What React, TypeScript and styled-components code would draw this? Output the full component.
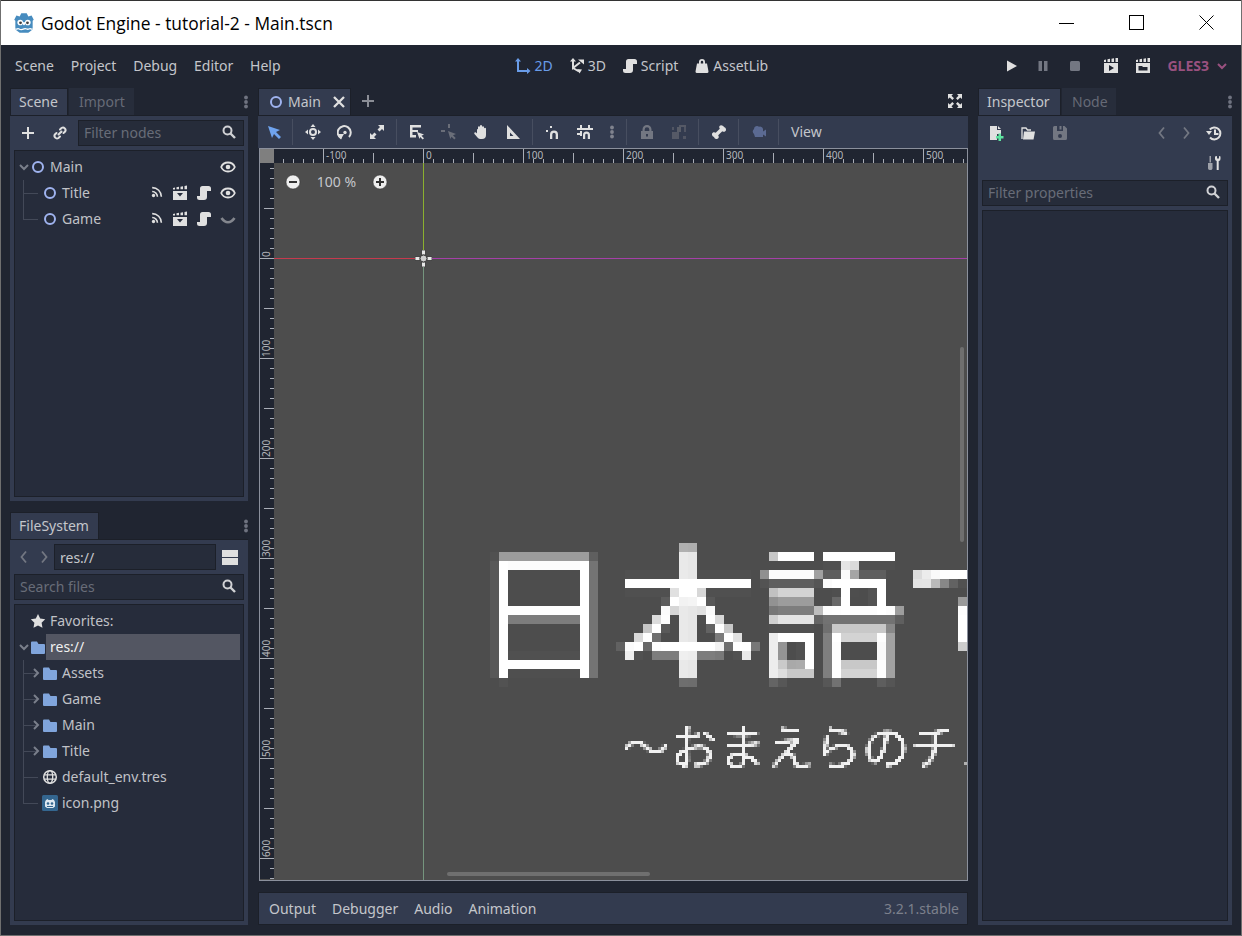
import React from 'react';
import styled, { createGlobalStyle } from 'styled-components';

const GlobalStyle = createGlobalStyle`
  html, body {
    margin: 0;
    padding: 0;
    background: #202531;
    font-family: "Noto Sans", "Open Sans", sans-serif;
  }
`;

// ---- icons, all drawn on the 16x16 grid godot uses ----

const Svg = styled.svg<{ $s?: number }>`
  display: block;
  flex: none;
  width: ${p => p.$s || 16}px;
  height: ${p => p.$s || 16}px;
`;

type IconProps = { c?: string; s?: number };
const WHITE = '#e0e0e0';
const DIM = '#737782';

const mk = (body: (c: string) => React.ReactNode, fallback = WHITE) =>
  ({ c = fallback, s }: IconProps) => (
    <Svg $s={s} viewBox="0 0 16 16">
      {body(c)}
    </Svg>
  );

const NodeIcon = mk(c => <circle cx="8" cy="8" r="5" fill="none" stroke={c} strokeWidth="2" />, '#9fb3ef');
const PlusIcon = mk(c => <path d="M7 2h2v5h5v2H9v5H7V9H2V7h5z" fill={c} />);
const LinkIcon = mk(c => (
  <g fill="none" stroke={c} strokeWidth="2" strokeLinecap="round">
    <path d="M6.5 9.5l3-3" />
    <path d="M8 4.5l1.5-1.5a2.6 2.6 0 0 1 3.6 3.6L11.5 8" />
    <path d="M8 11.5L6.5 13a2.6 2.6 0 0 1-3.6-3.6L4.500 8" />
  </g>
));
const SearchIcon = mk(c => (
  <g fill="none" stroke={c}>
    <circle cx="6.500" cy="6.500" r="4" strokeWidth="2" />
    <path d="M9.500 9.500l4.500 4.500" strokeWidth="2.400" />
  </g>
), '#d0d1d4');
const KebabIcon = mk(c => (
  <g fill={c}>
    <circle cx="8" cy="3.500" r="1.900" />
    <circle cx="8" cy="8" r="1.900" />
    <circle cx="8" cy="12.500" r="1.900" />
  </g>
), '#6f7380');
const EyeIcon = mk(c => (
  <g>
    <path d="M8 3.500C4.500 3.500 2 6 1.200 8c.8 2 3.300 4.500 6.800 4.500s6-2.500 6.800-4.500C14 6 11.500 3.500 8 3.500z" fill="none" stroke={c} strokeWidth="1.800" />
    <circle cx="8" cy="8" r="2.300" fill={c} />
  </g>
));
const EyeClosedIcon = mk(c => <path d="M1.500 7c2 3 4.200 4.200 6.500 4.200S12.500 10 14.500 7" fill="none" stroke={c} strokeWidth="2.600" opacity="0.5" />);
const SignalIcon = mk(c => (
  <g fill="none" stroke={c} strokeWidth="1.800">
    <circle cx="4" cy="12" r="1.900" fill={c} stroke="none" />
    <path d="M2.500 7.500a6 6 0 0 1 6 6" />
    <path d="M2.500 3a10.500 10.500 0 0 1 10.500 10.500" />
  </g>
));
const ClapperIcon = mk(c => (
  <g fill={c}>
    <path d="M1 3l2-.5v2H1zM4.500 2.300l2.500-.5v2.500H4.500zM8.500 1.700l2.500-.5v3H8.500zM12.500 1l2.500-.5v3.800h-2.500z" />
    <path fillRule="evenodd" d="M1 6h14v9H1zM5 8l3 3.500L11 8z" />
  </g>
));
const ScriptIcon = mk(c => <path d="M6.500 1A2.500 2.500 0 0 0 4 3.500V11H1v1.500A2.500 2.500 0 0 0 3.500 15H8a3 3 0 0 0 3-3V6h4V3.500A2.500 2.500 0 0 0 12.500 1z" fill={c} />);
const FolderIcon = mk(c => <path d="M2 2.500a1 1 0 0 0-1 1V14a1 1 0 0 0 1 1h12a1 1 0 0 0 1-1V6a1 1 0 0 0-1-1H8.500L7 2.500z" fill={c} />, '#80a5dc');
const ChevronDown = mk(c => <path d="M4 6l4 4 4-4" fill="none" stroke={c} strokeWidth="2" />, '#7a7f8b');
const ChevronRight = mk(c => <path d="M6 4l4 4-4 4" fill="none" stroke={c} strokeWidth="2" />, '#7a7f8b');
const BackIcon = mk(c => <path d="M10 2.500L5.500 8l4.500 5.500" fill="none" stroke={c} strokeWidth="1.800" />, DIM);
const ForwardIcon = mk(c => <path d="M6 2.500L10.500 8 6 13.500" fill="none" stroke={c} strokeWidth="1.800" />, DIM);
const StarIcon = mk(c => <path d="M8 1l2.200 4.600 5 .7-3.600 3.500.9 5L8 12.400l-4.500 2.400.9-5L.8 6.300l5-.7z" fill={c} />);
const SplitIcon = mk(c => <path d="M0 1h16v7H0zM0 9h16v7H0z" fill={c} />);
const GlobeIcon = mk(c => (
  <g fill="none" stroke={c} strokeWidth="1.300">
    <circle cx="8" cy="8" r="6.300" strokeWidth="1.500" />
    <ellipse cx="8" cy="8" rx="2.700" ry="6.300" />
    <path d="M2 5.800h12M2 10.200h12" />
  </g>
));
const IconPng = () => (
  <Svg viewBox="0 0 16 16">
    <rect width="16" height="16" rx="1.500" fill="#34668f" />
    <path d="M4 5l1.500-1 1 1h3l1-1L12 5l1 2v4.500l-2 1.500H5l-2-1.500V7z" fill="#dfe9f1" />
    <circle cx="6" cy="8.500" r="1.300" fill="#34668f" />
    <circle cx="10" cy="8.500" r="1.300" fill="#34668f" />
    <path d="M5 11.500h6" stroke="#34668f" />
  </Svg>
);
const CloseIcon = mk(c => <path d="M3 3l10 10M13 3L3 13" stroke={c} strokeWidth="2.300" fill="none" />);
const FullIcon = mk(c => (
  <path d="M1 1h5L4.500 2.800 7 5.300 5.300 7 2.800 4.500 1 6zM15 1v5l-1.800-1.500L10.700 7 9 5.300l2.500-2.500L10 1zM1 15v-5l1.800 1.500L5.300 9 7 10.700l-2.500 2.500L6 15zM15 15h-5l1.500-1.800L9 10.700 10.700 9l2.500 2.500L15 10z" fill={c} />
));

const SelectIcon = mk(c => <path d="M2 2l12 4-4 2 5 5-2 2-5-5-2 4z" fill={c} />, '#6fa3ee');
const MoveIcon = mk(c => (
  <g fill={c}>
    <path d="M8 0l2.500 3h-5zM8 16l-2.500-3h5zM0 8l3-2.500v5zM16 8l-3 2.500v-5z" />
    <circle cx="8" cy="8" r="3" fill="none" stroke={c} strokeWidth="2" />
  </g>
));
const RotateIcon = mk(c => (
  <g>
    <path d="M4.500 14.500A6.500 6.500 0 1 1 12 13" fill="none" stroke={c} strokeWidth="2" />
    <path d="M1 10h6l-3 5z" fill={c} />
    <circle cx="8" cy="8.500" r="1.700" fill={c} />
  </g>
));
const ScaleIcon = mk(c => (
  <path d="M9 1h6v6l-2-2-2.500 2.500L8.500 5.500 11 3zM7 15H1V9l2 2 2.500-2.500 2 2L5 13z" fill={c} />
));
const ListSelectIcon = mk(c => (
  <g fill={c}>
    <path d="M1 1h11v2.500H3.500V6H9v2H3.500v3H7v2.500H1z" />
    <path d="M8 8l7 2.500-2.500 1.200 2.500 2.500-1.300 1.300-2.500-2.500L10.500 15z" />
  </g>
));
const PointerDimIcon = mk(c => (
  <g fill={c}>
    <path d="M7 0h2v4H7zM0 6h4v2H0z" />
    <path d="M7 7l8 3-3 1.300 2.700 2.700-1.400 1.400-2.700-2.700L9.300 15z" />
  </g>
), '#6a6e79');
const HandIcon = mk(c => (
  <path d="M5 5.500V3.200a1 1 0 0 1 2 0V2a1 1 0 0 1 2 0v1.200a1 1 0 0 1 2 0v1.500a1 1 0 0 1 2 0V11a4 4 0 0 1-4 4H7a3 3 0 0 1-2.500-1.400L1.500 10a1 1 0 0 1 1.500-1.400l1 1V5.500a.5.500 0 0 1 1 0z" fill={c} />
));
const RulerIcon = mk(c => <path fillRule="evenodd" d="M2 1l13 14H2zM5 8.500V12h3.500z" fill={c} />);
const SnapIcon = mk(c => (
  <g fill={c}>
    <path fillRule="evenodd" d="M5 15V10.500a4 4 0 0 1 8 0V15h-2.300v-4.500a1.700 1.700 0 0 0-3.400 0V15z" />
    <rect x="1" y="6" width="2" height="2" />
    <rect x="5" y="2" width="2" height="2" />
  </g>
));
const GridSnapIcon = mk(c => (
  <g fill={c}>
    <path fillRule="evenodd" d="M6 15V11a3.500 3.500 0 0 1 7 0v4h-2.200v-4a1.300 1.300 0 0 0-2.600 0v4z" />
    <path d="M3 1h2v3h6V1h2v3h3v2H0V4h3zM3 7h2v5H3zM0 9h4v2H0z" />
  </g>
));
const LockIcon = mk(c => (
  <path fillRule="evenodd" d="M8 1a4.500 4.500 0 0 0-4.500 4.500V7H2v8h12V7h-1.500V5.500A4.500 4.500 0 0 0 8 1zm0 2.200a2.300 2.300 0 0 1 2.300 2.300V7H5.700V5.500A2.300 2.300 0 0 1 8 3.200zM7 10h2v2.500H7z" fill={c} />
), DIM);
const GroupIcon = mk(c => (
  <g fill={c}>
    <path d="M8 1h7v2H8zM1 8h7v7H1z" opacity="0.9" />
    <path d="M6 3h4v5H6z" />
    <path d="M13 3h2v5h-2zM1 3h2v3H1zM12 12h3v3h-3z" opacity="0.8" />
  </g>
), '#595d68');
const BoneIcon = mk(c => (
  <path d="M11 1.500a2.500 2.500 0 0 1 2 1.500 2.500 2.500 0 0 1 1 4.500c-1 .5-2 .2-2.700-.3L7.200 11.300c.5.800.8 1.800.3 2.700a2.500 2.500 0 0 1-4.500-1 2.500 2.500 0 0 1-1-4.500c1-.5 2-.2 2.700.3l4.100-4.100C8.300 3.900 8 3 8.500 2A2.500 2.500 0 0 1 11 1.500z" fill={c} />
));
const CameraIcon = mk(c => <path d="M3 5a3 3 0 0 1 5-2.200A3 3 0 0 1 12 5v2.500L15 5.500v7l-3-2V13H4l-1-3a3.500 3.500 0 0 1 0-5z" fill={c} />, '#5b6a92');
const TwoDIcon = mk(c => (
  <path d="M3 0l3 3.500H4V12h8v-2l3.500 3-3.500 3v-2H2V3.500H0z" fill={c} />
), '#699ce8');
const ThreeDIcon = mk(c => (
  <g>
    <path d="M4 2v8l7-5.500M4 10l6 3.500" fill="none" stroke={c} strokeWidth="2" />
    <path d="M1 3.500L4 0l3 3.500zM9 1.500h6v5zM8 11l5 .5-2.500 4z" fill={c} />
  </g>
));
const BagIcon = mk(c => (
  <path fillRule="evenodd" d="M8 1a3 3 0 0 0-3 3v1.500H3l-1.500 8A1.500 1.500 0 0 0 3 15h10a1.500 1.500 0 0 0 1.500-1.500L13 5.500h-2V4a3 3 0 0 0-3-3zm0 1.800A1.200 1.200 0 0 1 9.200 4v1.500H6.800V4A1.200 1.200 0 0 1 8 2.800z" fill={c} />
));
const PlayIcon = mk(c => <path d="M4 2.500L14 8 4 13.500z" fill={c} />);
const PauseIcon = mk(c => <path d="M3.500 3h3.500v10H3.500zM9 3h3.500v10H9z" fill={c} />, DIM);
const StopIcon = mk(c => <rect x="3" y="3" width="10" height="10" rx="1.500" fill={c} />, DIM);
const MoviePlayIcon = mk(c => (
  <g fill={c}>
    <path d="M1 2l2-.5v2.500H1zM4.500 1.300L7 .8V4H4.500zM8.500.7L11 .3V4H8.500zM12.500 0L15 0v4h-2.500z" />
    <path fillRule="evenodd" d="M1 5h14v10H1zM6 7v6l5-3z" />
  </g>
));
const MovieFolderIcon = mk(c => (
  <g fill={c}>
    <path d="M1 2l2-.5v2.500H1zM4.500 1.300L7 .8V4H4.500zM8.500.7L11 .3V4H8.500zM12.500 0L15 0v4h-2.500z" />
    <path fillRule="evenodd" d="M1 5h14v10H1zM3.500 8v4.500h9V9H8L7 8z" />
  </g>
));
const NewDocIcon = () => (
  <Svg viewBox="0 0 16 16">
    <path d="M2 1h7v4h4v4H9v6H2z" fill={WHITE} />
    <path d="M10 1l3 3h-3z" fill={WHITE} />
    <path d="M10.500 8.500h2.500v2.500h2.500v2.500H13V16h-2.500v-2.500H8V11h2.500z" fill="#5fe3a0" />
  </Svg>
);
const OpenIcon = mk(c => (
  <g>
    <path d="M2 14V3h4l1.500 2H11" fill="none" stroke={c} strokeWidth="1.300" />
    <path d="M4 6.500h11l-1.500 8H3z" fill={c} />
  </g>
));
const SaveIcon = mk(c => (
  <path fillRule="evenodd" d="M2.500 1A1.500 1.500 0 0 0 1 2.500v11A1.500 1.500 0 0 0 2.500 15h11a1.500 1.500 0 0 0 1.500-1.500v-10L12.500 1H11v5H5V1zM7.500 1v3.500H9.500V1zM8 9a2 2 0 1 1 0 4 2 2 0 0 1 0-4z" fill={c} />
), DIM);
const HistoryIcon = mk(c => (
  <g>
    <path d="M3.800 4.500A6 6 0 1 1 4 12.500" fill="none" stroke={c} strokeWidth="2" />
    <path d="M0 6h6L3 10z" fill={c} />
    <path d="M8 4.500h2V8h2.500v2H8z" fill={c} />
  </g>
));
const ToolsIcon = mk(c => (
  <g fill={c}>
    <path d="M3.500 1h1.500v6.500H3.500zM2 8h4.500v5.500A2 2 0 0 1 4.500 15h-.5A2 2 0 0 1 2 13.500z" opacity="0.62" />
    <path d="M9 1.500V4a2 2 0 0 0 1.700 2v9h2V6a2 2 0 0 0 1.800-2V1.500L13 1v2.500h-2V1z" />
  </g>
));

const LogoSvg = styled.svg`
  width: 26px;
  height: 26px;
  flex: none;
`;

const GodotLogo = () => (
  <LogoSvg viewBox="0 0 24 24">
    <path d="M3 9l2-4 3 1 1.500-3h5L16 6l3-1 2 4-1 1v8l-4 3H8l-4-3v-8z" fill="#478cbf" />
    <circle cx="8.500" cy="11.500" r="2.600" fill="#fff" />
    <circle cx="15.500" cy="11.500" r="2.600" fill="#fff" />
    <circle cx="8.800" cy="11.800" r="1.300" fill="#414042" />
    <circle cx="15.200" cy="11.800" r="1.300" fill="#414042" />
    <rect x="11" y="11" width="2" height="3" rx="1" fill="#fff" />
    <path d="M4 17.500c2 .5 2-1 3.500 0s2 1 4.500 0 2.500 1 4.500 0 1.500.5 3.500 0" fill="none" stroke="#fff" strokeWidth="1.200" />
  </LogoSvg>
);

// ---- window frame ----

const Page = styled.div`
  width: 1242px;
  height: 936px;
  box-sizing: border-box;
  display: flex;
  flex-direction: column;
  overflow: hidden;
  background: #202531;
  border-left: 1px solid #6f6f6f;
  border-right: 1px solid #6f6f6f;
  border-bottom: 1px solid #6f6f6f;
`;

const TitleBar = styled.div`
  height: 45px;
  flex: none;
  box-sizing: border-box;
  display: flex;
  align-items: center;
  padding: 0 0 0 10px;
  background: #fff;
  border-top: 1px solid #333;
`;

const TitleText = styled.div`
  margin-left: 4px;
  font-family: "Open Sans", "Noto Sans", sans-serif;
  font-size: 17.4px;
  color: #000;
  white-space: nowrap;
`;

const WinButtons = styled.div`
  margin-left: auto;
  display: flex;
  align-items: center;
  margin-right: 26px;
  gap: 54px;
`;

const WinSvg = styled.svg`
  width: 16px;
  height: 16px;
  display: block;
`;

const MenuBar = styled.div`
  height: 43px;
  flex: none;
  box-sizing: border-box;
  display: flex;
  align-items: center;
  padding: 0 0 2px 14px;
  color: #c4c6cb;
  font-size: 14px;
`;

const MenuItem = styled.span`
  margin-right: 16.8px;
`;

const MainTabs = styled.div`
  display: flex;
  align-items: center;
  gap: 16px;
  margin-left: 218px;
`;

const MainTab = styled.div<{ $active?: boolean }>`
  display: flex;
  align-items: center;
  gap: 3px;
  color: ${p => (p.$active ? '#699ce8' : '#c4c6cb')};
`;

const RunGroup = styled.div`
  margin-left: auto;
  display: flex;
  align-items: center;
  margin-right: 11px;
`;

const RunButton = styled.div<{ $w: number }>`
  width: ${p => p.$w}px;
  display: flex;
  justify-content: center;
`;

const Driver = styled.div`
  display: flex;
  align-items: center;
  gap: 5px;
  margin-left: 12px;
  color: #99517f;
  font-weight: 700;
  font-size: 14px;
`;

const Workspace = styled.div`
  flex: 1;
  min-height: 0;
  display: flex;
  gap: 10px;
  padding: 0 9px 10px 9px;
`;

const Column = styled.div<{ $w: number; $gap?: number }>`
  width: ${p => p.$w}px;
  flex: none;
  display: flex;
  flex-direction: column;
  gap: ${p => p.$gap || 0}px;
`;

const Dock = styled.div<{ $h?: number }>`
  display: flex;
  flex-direction: column;
  ${p => (p.$h ? `height: ${p.$h}px; flex: none;` : 'flex: 1; min-height: 0;')}
`;

const TabRow = styled.div`
  height: 28px;
  flex: none;
  display: flex;
  align-items: stretch;
  margin-bottom: -1px;
`;

const Tab = styled.div<{ $active?: boolean; $w: number }>`
  width: ${p => p.$w}px;
  box-sizing: border-box;
  display: flex;
  align-items: center;
  padding: 0 0 2px ${p => (p.$active ? 8 : 10)}px;
  font-size: 14px;
  margin-right: 1px;
  background: ${p => (p.$active ? '#333b4f' : '#272d3b')};
  color: ${p => (p.$active ? '#c4c6cb' : '#666a76')};
  ${p => p.$active && 'border-top: 1px solid #1c2029; border-left: 1px solid #1c2029; border-right: 1px solid #1c2029;'}
`;

const DockMenu = styled.div`
  margin-left: auto;
  margin-right: -6px;
  align-self: center;
  padding-bottom: 1px;
`;

const Panel = styled.div`
  flex: 1;
  min-height: 0;
  box-sizing: border-box;
  display: flex;
  flex-direction: column;
  padding: 4px;
  gap: 4px;
  background: #333b4f;
  border-top: 1px solid #1c2029;
`;

const Bar = styled.div`
  height: 26px;
  flex: none;
  display: flex;
  align-items: center;
`;

const BarIcon = styled.div<{ $w: number }>`
  width: ${p => p.$w}px;
  flex: none;
  display: flex;
  justify-content: center;
`;

const Input = styled.div<{ $bright?: boolean }>`
  flex: 1;
  height: 100%;
  box-sizing: border-box;
  display: flex;
  align-items: center;
  justify-content: space-between;
  padding: 0 6px ${p => (p.$bright ? 0 : 2)}px 5px;
  background: #262c3a;
  border: 1px solid #1c2029;
  font-size: 14px;
  color: ${p => (p.$bright ? '#c4c6cb' : '#686c78')};
`;

const Tree = styled.div`
  flex: 1;
  min-height: 0;
  box-sizing: border-box;
  padding-top: 3px;
  background: #262c3b;
  border: 1px solid #1c2029;
`;

const RowGroup = styled.div``;

const Row = styled.div<{ $depth?: number; $guide?: boolean }>`
  position: relative;
  height: 26px;
  display: flex;
  align-items: center;
  padding-left: ${p => 1 + 12 * (p.$depth || 0)}px;
  font-size: 14px;
  color: #c0c2c7;
  ${p =>
    p.$guide &&
    `&::before {
      content: '';
      position: absolute;
      left: 8px;
      top: -13px;
      width: 14px;
      height: 26px;
      border-left: 1px solid #434958;
      border-bottom: 1px solid #434958;
    }
    &:first-child::before {
      top: 0;
      height: 13px;
    }`}
`;

const Fold = styled.div`
  position: relative;
  width: 16px;
  flex: none;
`;

const IconSlot = styled.div`
  position: relative;
  width: 14px;
  flex: none;
  margin-left: -1px;
  display: flex;
  justify-content: center;
`;

const Label = styled.div<{ $selected?: boolean }>`
  margin-left: 5px;
  height: 26px;
  line-height: 26px;
  ${p =>
    p.$selected
      ? 'flex: 1; margin-left: 1px; margin-right: 3px; padding-left: 4px; background: #535662; color: #f0f0f0;'
      : ''}
`;

const RowIcons = styled.div`
  margin-left: auto;
  display: flex;
  gap: 8px;
  padding-right: 7px;
`;

// ---- center column ----

const EditorTabs = styled.div`
  height: 28px;
  flex: none;
  display: flex;
  align-items: stretch;
  margin-bottom: -1px;
`;

const SceneTab = styled.div`
  width: 93px;
  box-sizing: border-box;
  display: flex;
  align-items: center;
  padding: 0 0 2px 9px;
  gap: 4px;
  font-size: 14px;
  color: #c4c6cb;
  background: #333b4f;
  border: 1px solid #1c2029;
  border-bottom: none;
`;

const TabClose = styled.div`
  margin-left: auto;
  margin-right: 3px;
`;

const AddTab = styled.div`
  margin-left: 9px;
  align-self: center;
  padding-bottom: 2px;
`;

const FullBtn = styled.div`
  margin-left: auto;
  margin-right: 5px;
  align-self: center;
  padding-bottom: 2px;
`;

const Toolbar = styled.div`
  height: 33px;
  flex: none;
  box-sizing: border-box;
  display: flex;
  align-items: center;
  padding-bottom: 1px;
  background: #333b4f;
  border-top: 1px solid #1c2029;
`;

const ToolButton = styled.div<{ $w?: number }>`
  width: ${p => p.$w || 32}px;
  flex: none;
  display: flex;
  justify-content: center;
`;

const ToolSep = styled.div`
  width: 1px;
  height: 26px;
  flex: none;
  margin: 0 4px 0 3px;
  background: #474e60;
`;

const ToolText = styled.div`
  margin-left: 8px;
  font-size: 14px;
  color: #c4c6cb;
`;

const Viewport = styled.div`
  flex: 1;
  min-height: 0;
  margin: 0 0 0 1px;
  width: 709px;
  box-sizing: border-box;
  display: flex;
  flex-direction: column;
  border: 1px solid #8b909c;
  background: #4d4d4d;
`;

const RulerTop = styled.div`
  height: 14px;
  flex: none;
  display: flex;
`;

const RulerCorner = styled.div`
  width: 14px;
  flex: none;
  background: #7f7f7f;
`;

const RulerSvg = styled.svg`
  display: block;
  flex: none;
  background: #202531;
  font-family: "Noto Sans", sans-serif;
  font-size: 10px;
`;

const CanvasRow = styled.div`
  flex: 1;
  min-height: 0;
  display: flex;
`;

const Canvas = styled.div`
  position: relative;
  flex: 1;
  overflow: hidden;
  background: #4d4d4d;
`;

const ZoomBar = styled.div`
  position: absolute;
  left: 11px;
  top: 9px;
  display: flex;
  align-items: center;
  font-size: 14px;
  color: #c4c6cb;
`;

const ZoomLabel = styled.div`
  width: 71px;
  text-align: center;
`;

const Axis = styled.div<{ $c: string; $v?: boolean; $left?: number; $top?: number; $w?: number; $h?: number }>`
  position: absolute;
  left: ${p => p.$left}px;
  top: ${p => p.$top}px;
  width: ${p => (p.$v ? '1px' : `${p.$w}px`)};
  height: ${p => (p.$v ? `${p.$h}px` : '1px')};
  background: ${p => p.$c};
`;

const Origin = styled.svg`
  position: absolute;
  left: 141px;
  top: 87px;
  width: 17px;
  height: 17px;
`;

const PixelTitle = styled.div`
  position: absolute;
  left: 198px;
  top: 362px;
  width: 720px;
  height: 162px;
  font-family: "Noto Sans CJK JP", sans-serif;
  font-size: 144px;
  line-height: 162px;
  color: #fff;
  white-space: nowrap;
  -webkit-text-stroke: 1px #fff;
  filter: url(#pixel9);
`;

const PixelSub = styled.div`
  position: absolute;
  left: 348px;
  top: 545px;
  width: 720px;
  height: 72px;
  font-family: "Noto Sans CJK JP", sans-serif;
  font-size: 48px;
  line-height: 72px;
  color: #fff;
  opacity: 0.92;
  white-space: nowrap;
  filter: url(#pixel3);
`;

const ScrollV = styled.div`
  position: absolute;
  right: 3px;
  top: 184px;
  width: 4px;
  height: 195px;
  border-radius: 2px;
  background: #6f6f6f;
`;

const ScrollH = styled.div`
  position: absolute;
  left: 173px;
  bottom: 4px;
  width: 203px;
  height: 4px;
  border-radius: 2px;
  background: #6f6f6f;
`;

const HiddenDefs = styled.svg`
  position: absolute;
  width: 0;
  height: 0;
`;

const BottomBar = styled.div`
  height: 33px;
  flex: none;
  box-sizing: border-box;
  display: flex;
  align-items: center;
  padding: 0 8px 0 10px;
  gap: 16px;
  font-size: 14px;
  color: #c4c6cb;
  background: #333b4f;
  border: 1px solid #1c2029;
`;

const Version = styled.div`
  margin-left: auto;
  color: #7c808c;
`;

// ---- inspector bits ----

const InspectorBar = styled.div<{ $end?: boolean }>`
  height: 26px;
  flex: none;
  display: flex;
  align-items: center;
  margin: 0 -2px;
  ${p => p.$end && 'justify-content: flex-end;'}
`;

const InspectorSpacer = styled.div`
  flex: 1;
`;

// ---- rulers ----

const range = (from: number, to: number, step: number) => {
  const out: number[] = [];
  for (let v = from; v <= to; v += step) out.push(v);
  return out;
};

const TICK = '#a9adb6';

const HRuler = () => (
  <RulerSvg width={693} height={14}>
    {range(-140, 540, 10).map(v => {
      const x = 149 + v + 0.5;
      const y = v % 100 === 0 ? 0 : v % 50 === 0 ? 4 : 10;
      return <line key={v} x1={x} x2={x} y1={y} y2={14} stroke={TICK} />;
    })}
    {range(-100, 500, 100).map(v => (
      <text key={v} x={149 + v + 3} y={10} fill="#b4b6bb">
        {v}
      </text>
    ))}
  </RulerSvg>
);

const VRuler = () => (
  <RulerSvg width={14} height={716}>
    {range(-90, 620, 10).map(v => {
      const y = 95 + v + 0.5;
      const x = v % 100 === 0 ? 0 : v % 50 === 0 ? 4 : 10;
      return <line key={v} x1={x} x2={14} y1={y} y2={y} stroke={TICK} />;
    })}
    {range(0, 600, 100).map(v => (
      <text key={v} transform={`translate(10 ${95 + v - 1}) rotate(-90)`} fill="#b4b6bb">
        {v}
      </text>
    ))}
  </RulerSvg>
);

const PixelFilter = ({ id, cell, blur }: { id: string; cell: number; blur: number }) => {
  const r = (cell - 1) / 2;
  return (
    <filter id={id} x="0" y="0" width="100%" height="100%" colorInterpolationFilters="sRGB">
      <feGaussianBlur in="SourceGraphic" stdDeviation={blur} result="soft" />
      <feFlood x={r} y={r} width="1" height="1" floodColor="#000" />
      <feComposite width={cell} height={cell} />
      <feTile result="grid" />
      <feComposite in="soft" in2="grid" operator="in" />
      <feMorphology operator="dilate" radius={r} />
    </filter>
  );
};

const TreeRow = ({
  depth,
  guide,
  fold,
  icon,
  label,
  selected,
  right,
}: {
  depth?: number;
  guide?: boolean;
  fold?: 'down' | 'right';
  icon: React.ReactNode;
  label: string;
  selected?: boolean;
  right?: React.ReactNode;
}) => (
  <Row $depth={depth} $guide={guide}>
    <Fold>{fold === 'down' ? <ChevronDown /> : fold === 'right' ? <ChevronRight /> : null}</Fold>
    <IconSlot>{icon}</IconSlot>
    <Label $selected={selected}>{label}</Label>
    {right && <RowIcons>{right}</RowIcons>}
  </Row>
);

const NODE_ACTIONS = (
  <>
    <SignalIcon s={14} />
    <ClapperIcon />
    <ScriptIcon />
  </>
);

export default function App() {
  return (
    <Page>
      <GlobalStyle />
      <HiddenDefs>
        <defs>
          <PixelFilter id="pixel9" cell={9} blur={1.6} />
          <PixelFilter id="pixel3" cell={3} blur={0.7} />
        </defs>
      </HiddenDefs>

      <TitleBar>
        <GodotLogo />
        <TitleText>Godot Engine - tutorial-2 - Main.tscn</TitleText>
        <WinButtons>
          <WinSvg viewBox="0 0 16 16">
            <path d="M0 8.500h15" stroke="#000" />
          </WinSvg>
          <WinSvg viewBox="0 0 16 16">
            <rect x="0.500" y="0.500" width="14" height="14" fill="none" stroke="#000" />
          </WinSvg>
          <WinSvg viewBox="0 0 16 16">
            <path d="M0.500 0.500l14 14M14.500 0.500l-14 14" stroke="#000" />
          </WinSvg>
        </WinButtons>
      </TitleBar>

      <MenuBar>
        <MenuItem>Scene</MenuItem>
        <MenuItem>Project</MenuItem>
        <MenuItem>Debug</MenuItem>
        <MenuItem>Editor</MenuItem>
        <MenuItem>Help</MenuItem>
        <MainTabs>
          <MainTab $active>
            <TwoDIcon />
            2D
          </MainTab>
          <MainTab>
            <ThreeDIcon />
            3D
          </MainTab>
          <MainTab>
            <ScriptIcon />
            Script
          </MainTab>
          <MainTab>
            <BagIcon />
            AssetLib
          </MainTab>
        </MainTabs>
        <RunGroup>
          <RunButton $w={32}>
            <PlayIcon />
          </RunButton>
          <RunButton $w={32}>
            <PauseIcon />
          </RunButton>
          <RunButton $w={32}>
            <StopIcon />
          </RunButton>
          <RunButton $w={40}>
            <MoviePlayIcon />
          </RunButton>
          <RunButton $w={24}>
            <MovieFolderIcon />
          </RunButton>
          <Driver>
            GLES3
            <ChevronDown c="#99517f" />
          </Driver>
        </RunGroup>
      </MenuBar>

      <Workspace>
        <Column $w={238} $gap={11}>
          <Dock $h={413}>
            <TabRow>
              <Tab $active $w={58}>Scene</Tab>
              <Tab $w={65}>Import</Tab>
              <DockMenu>
                <KebabIcon />
              </DockMenu>
            </TabRow>
            <Panel>
              <Bar>
                <BarIcon $w={28}><PlusIcon /></BarIcon>
                <BarIcon $w={36}><LinkIcon /></BarIcon>
                <Input>
                  Filter nodes
                  <SearchIcon />
                </Input>
              </Bar>
              <Tree>
                <TreeRow
                  fold="down"
                  icon={<NodeIcon />}
                  label="Main"
                  right={<EyeIcon />}
                />
                <RowGroup>
                  <TreeRow
                    depth={1}
                    guide
                    icon={<NodeIcon />}
                    label="Title"
                    right={
                      <>
                        {NODE_ACTIONS}
                        <EyeIcon />
                      </>
                    }
                  />
                  <TreeRow
                    depth={1}
                    guide
                    icon={<NodeIcon />}
                    label="Game"
                    right={
                      <>
                        {NODE_ACTIONS}
                        <EyeClosedIcon />
                      </>
                    }
                  />
                </RowGroup>
              </Tree>
            </Panel>
          </Dock>
          <Dock>
            <TabRow>
              <Tab $active $w={89}>FileSystem</Tab>
              <DockMenu>
                <KebabIcon />
              </DockMenu>
            </TabRow>
            <Panel>
              <Bar>
                <BarIcon $w={20}><BackIcon /></BarIcon>
                <BarIcon $w={20}><ForwardIcon /></BarIcon>
                <Input $bright>res://</Input>
                <BarIcon $w={28}><SplitIcon /></BarIcon>
              </Bar>
              <Bar>
                <Input>
                  Search files
                  <SearchIcon />
                </Input>
              </Bar>
              <Tree>
                <TreeRow icon={<StarIcon />} label="Favorites:" />
                <TreeRow fold="down" icon={<FolderIcon />} label="res://" selected />
                <RowGroup>
                  <TreeRow depth={1} guide fold="right" icon={<FolderIcon />} label="Assets" />
                  <TreeRow depth={1} guide fold="right" icon={<FolderIcon />} label="Game" />
                  <TreeRow depth={1} guide fold="right" icon={<FolderIcon />} label="Main" />
                  <TreeRow depth={1} guide fold="right" icon={<FolderIcon />} label="Title" />
                  <TreeRow depth={1} guide icon={<GlobeIcon />} label="default_env.tres" />
                  <TreeRow depth={1} guide icon={<IconPng />} label="icon.png" />
                </RowGroup>
              </Tree>
            </Panel>
          </Dock>
        </Column>

        <Column $w={710} $gap={11}>
          <Dock>
            <EditorTabs>
              <SceneTab>
                <NodeIcon />
                Main
                <TabClose>
                  <CloseIcon />
                </TabClose>
              </SceneTab>
              <AddTab>
                <PlusIcon c="#8b8e96" />
              </AddTab>
              <FullBtn>
                <FullIcon />
              </FullBtn>
            </EditorTabs>
            <Toolbar>
              <ToolButton $w={31}><SelectIcon /></ToolButton>
              <ToolSep />
              <ToolButton><MoveIcon /></ToolButton>
              <ToolButton><RotateIcon /></ToolButton>
              <ToolButton><ScaleIcon /></ToolButton>
              <ToolSep />
              <ToolButton><ListSelectIcon /></ToolButton>
              <ToolButton><PointerDimIcon /></ToolButton>
              <ToolButton><HandIcon /></ToolButton>
              <ToolButton><RulerIcon /></ToolButton>
              <ToolSep />
              <ToolButton><SnapIcon /></ToolButton>
              <ToolButton><GridSnapIcon /></ToolButton>
              <ToolButton $w={22}><KebabIcon c="#80838e" /></ToolButton>
              <ToolSep />
              <ToolButton><LockIcon /></ToolButton>
              <ToolButton><GroupIcon /></ToolButton>
              <ToolSep />
              <ToolButton><BoneIcon /></ToolButton>
              <ToolSep />
              <ToolButton><CameraIcon /></ToolButton>
              <ToolSep />
              <ToolText>View</ToolText>
            </Toolbar>
            <Viewport>
              <RulerTop>
                <RulerCorner />
                <HRuler />
              </RulerTop>
              <CanvasRow>
                <VRuler />
                <Canvas>
                  <Axis $v $c="#8bb02f" $left={149} $top={0} $h={95} />
                  <Axis $v $c="#75957e" $left={149} $top={95} $h={640} />
                  <Axis $c="#c63a4e" $left={0} $top={95} $w={149} />
                  <Axis $c="#a540a8" $left={149} $top={95} $w={560} />
                  <Origin viewBox="0 0 17 17">
                    <path d="M6.500 0h4v5h-4zM6.500 12h4v5h-4zM0 6.500h5v4H0zM12 6.500h5v4h-5z" fill="#e8e8e8" stroke="#333" strokeWidth="0.800" />
                    <circle cx="8.500" cy="8.500" r="3.500" fill="#d0d0d0" stroke="#3a3a3a" />
                  </Origin>
                  <ZoomBar>
                    <Svg viewBox="0 0 16 16">
                      <circle cx="8" cy="8" r="7" fill="#eee" stroke="#2c2c2c" strokeWidth="0.500" />
                      <rect x="4" y="7" width="8" height="2" fill="#333" />
                    </Svg>
                    <ZoomLabel>100 %</ZoomLabel>
                    <Svg viewBox="0 0 16 16">
                      <circle cx="8" cy="8" r="7" fill="#eee" stroke="#2c2c2c" strokeWidth="0.500" />
                      <path d="M7 4h2v3h3v2H9v3H7V9H4V7h3z" fill="#333" />
                    </Svg>
                  </ZoomBar>
                  <PixelTitle>日本語で</PixelTitle>
                  <PixelSub>〜おまえらのチェック</PixelSub>
                  <ScrollV />
                  <ScrollH />
                </Canvas>
              </CanvasRow>
            </Viewport>
          </Dock>
          <BottomBar>
            <span>Output</span>
            <span>Debugger</span>
            <span>Audio</span>
            <span>Animation</span>
            <Version>3.2.1.stable</Version>
          </BottomBar>
        </Column>

        <Column $w={254}>
          <Dock>
            <TabRow>
              <Tab $active $w={83}>Inspector</Tab>
              <Tab $w={54}>Node</Tab>
              <DockMenu>
                <KebabIcon />
              </DockMenu>
            </TabRow>
            <Panel>
              <InspectorBar>
                <BarIcon $w={32}><NewDocIcon /></BarIcon>
                <BarIcon $w={32}><OpenIcon /></BarIcon>
                <BarIcon $w={32}><SaveIcon /></BarIcon>
                <InspectorSpacer />
                <BarIcon $w={24}><BackIcon /></BarIcon>
                <BarIcon $w={24}><ForwardIcon /></BarIcon>
                <BarIcon $w={32}><HistoryIcon /></BarIcon>
              </InspectorBar>
              <InspectorBar $end>
                <BarIcon $w={32}><ToolsIcon /></BarIcon>
              </InspectorBar>
              <Bar>
                <Input>
                  Filter properties
                  <SearchIcon />
                </Input>
              </Bar>
              <Tree />
            </Panel>
          </Dock>
        </Column>
      </Workspace>
    </Page>
  );
}
